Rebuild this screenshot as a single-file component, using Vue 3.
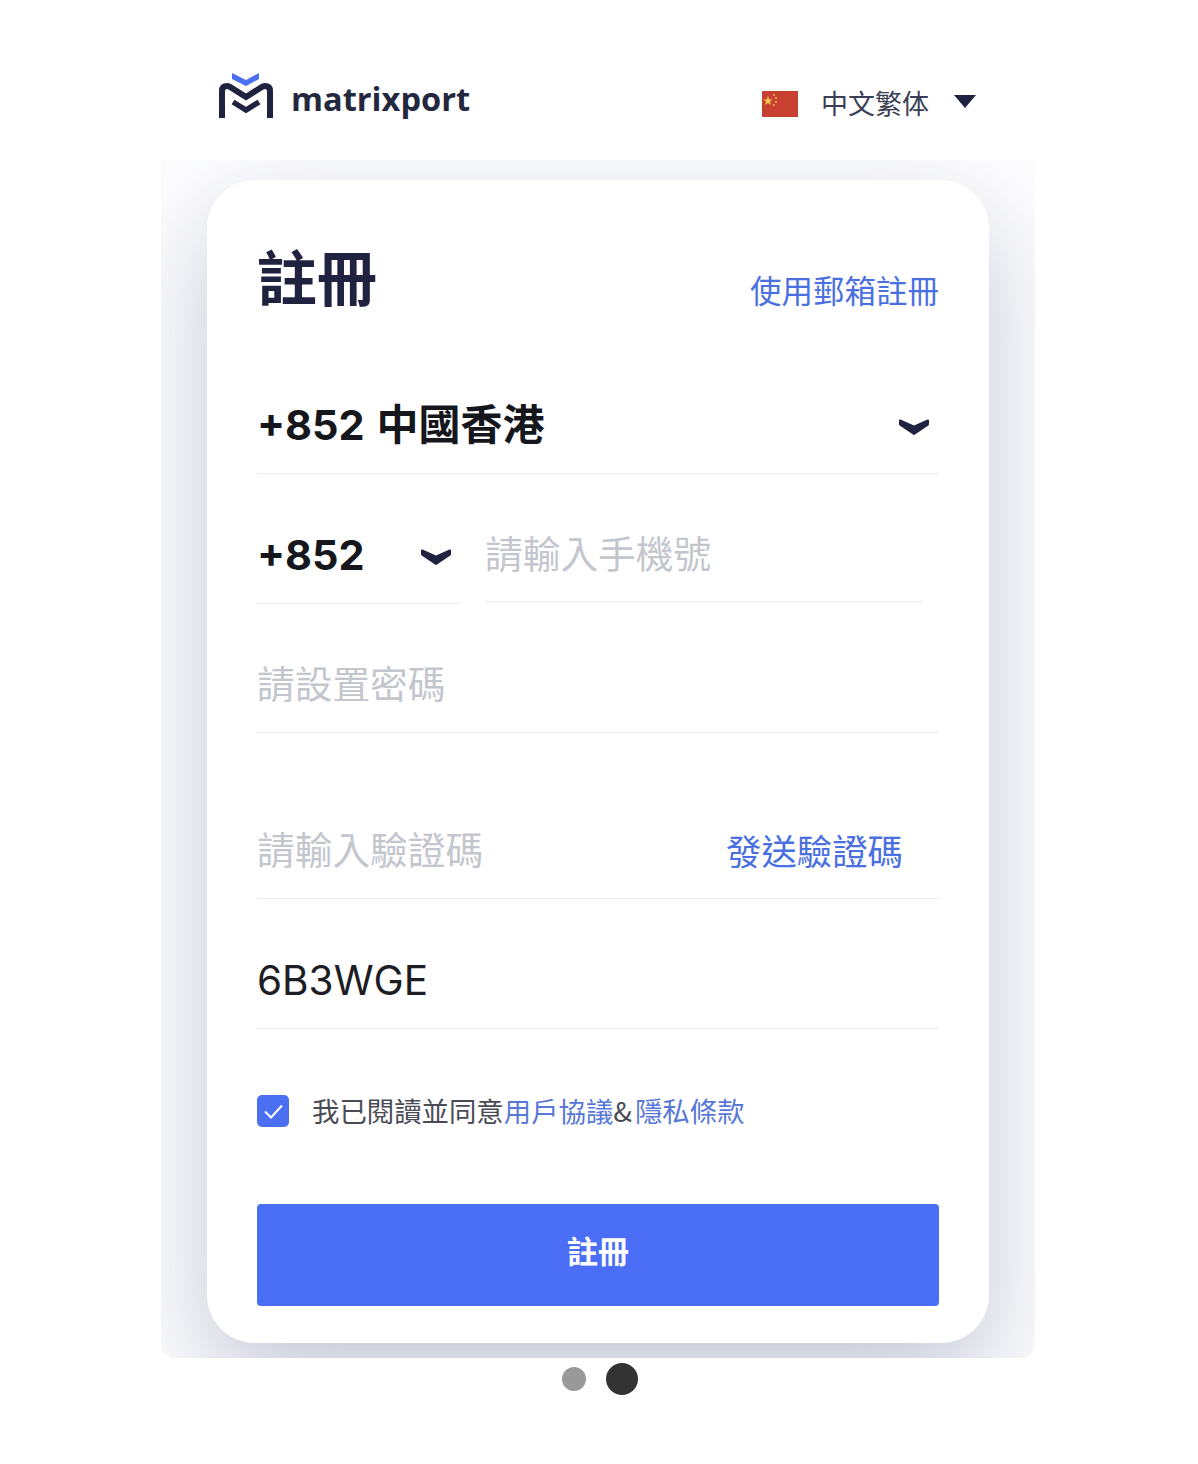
<script setup>
const cjk = '註冊'
</script>

<template>
  <div class="page">
    <header class="top">
      <div class="brand">
        <svg class="logo" viewBox="0 0 54 46" xmlns="http://www.w3.org/2000/svg">
          <path d="M13 0 L27 7 L40 0 V6 L27 13 L13 6 Z" fill="#4a6ff0" />
          <path d="M3 45 V18 Q3 13 8 13 Q10 13 12 14.5 L27 24 L42 14.5 Q44 13 46 13 Q51 13 51 18 V45" fill="none" stroke="#1f2340" stroke-width="6" />
          <path d="M14 29 L27 37 L40 29" fill="none" stroke="#1f2340" stroke-width="5.500" />
        </svg>
        <span class="brand-name">matrixport</span>
      </div>
      <div class="lang">
        <svg class="flag" viewBox="0 0 36 26" xmlns="http://www.w3.org/2000/svg">
          <rect width="36" height="26" fill="#c8402f" />
          <polygon points="6,5 7.2,8.4 10.8,8.4 7.9,10.6 9,14 6,12 3,14 4.1,10.6 1.2,8.4 4.8,8.4" fill="#f2c94c" />
          <circle cx="12" cy="4" r="0.9" fill="#f2c94c" />
          <circle cx="14" cy="7" r="0.9" fill="#f2c94c" />
          <circle cx="14" cy="11" r="0.9" fill="#f2c94c" />
          <circle cx="12" cy="14" r="0.9" fill="#f2c94c" />
        </svg>
        <span class="lang-name">中文繁体</span>
        <span class="caret"></span>
      </div>
    </header>

    <section class="panel">
      <div class="card">
        <div class="card-head">
          <h1 class="title">{{ cjk }}</h1>
          <a class="link-mail">使用郵箱註冊</a>
        </div>

        <div class="row row-region">
          <span class="value">+852 <span class="region">中國香港</span></span>
          <svg class="chev" viewBox="0 0 30 17" xmlns="http://www.w3.org/2000/svg">
            <path d="M1.5 0.5 L15 6.5 L28.500 0.5 Q30 0 30 1.500 V5 Q30 6 29 6.800 L16 15.600 Q15 16.200 14 15.600 L1 6.800 Q0 6 0 5 V1.500 Q0 0 1.500 0.5 Z" fill="#1f2340" />
          </svg>
        </div>

        <div class="phone">
          <div class="row code">
            <span class="value">+852</span>
            <svg class="chev" viewBox="0 0 30 17" xmlns="http://www.w3.org/2000/svg">
              <path d="M1.5 0.5 L15 6.5 L28.500 0.5 Q30 0 30 1.500 V5 Q30 6 29 6.800 L16 15.600 Q15 16.200 14 15.600 L1 6.800 Q0 6 0 5 V1.500 Q0 0 1.500 0.5 Z" fill="#1f2340" />
            </svg>
          </div>
          <div class="row number">
            <span class="hint">請輸入手機號</span>
          </div>
        </div>

        <div class="row row-pass">
          <span class="hint">請設置密碼</span>
        </div>

        <div class="row row-sms">
          <span class="hint">請輸入驗證碼</span>
          <a class="send">發送驗證碼</a>
        </div>

        <div class="row row-invite">
          <span class="invite">6B3WGE</span>
        </div>

        <div class="agree">
          <span class="check">
            <svg viewBox="0 0 32 32" xmlns="http://www.w3.org/2000/svg">
              <path d="M8 16.500 L14 22.500 L25 10.500" fill="none" stroke="#fff" stroke-width="2" />
            </svg>
          </span>
          <p class="agree-text">我已閱讀並同意<a>用戶協議</a><span class="amp">&amp;</span><a>隱私條款</a></p>
        </div>

        <button class="submit"><span>註冊</span></button>
      </div>
    </section>

    <div class="dots">
      <span class="dot"></span>
      <span class="dot active"></span>
    </div>
  </div>
</template>

<style>
html,
body {
  background: #fff;
}
</style>

<style scoped>
.page {
  width: 1198px;
  height: 1464px;
  overflow: hidden;
  font-family: "Noto Sans CJK TC", "Noto Sans", sans-serif;
  background: #fff;
}

.top {
  height: 160px;
  box-sizing: border-box;
  padding: 73px 222px 0 219px;
  display: flex;
  justify-content: space-between;
  align-items: flex-start;
}

.brand {
  display: flex;
  align-items: flex-start;
  gap: 18px;
}

.logo {
  width: 54px;
  height: 46px;
}

.brand-name {
  font-family: "Open Sans", sans-serif;
  font-size: 32.6px;
  font-weight: 700;
  color: #24283f;
  line-height: 46px;
  margin-top: 3px;
}

.lang {
  display: flex;
  align-items: center;
  margin-top: 10px;
}

.flag {
  width: 36px;
  height: 26px;
  margin-top: 2px;
}

.lang-name {
  font-size: 27px;
  line-height: 40px;
  color: #3a3f55;
  margin-left: 23px;
  margin-right: 25px;
}

.caret {
  width: 0;
  height: 0;
  border-left: 11px solid transparent;
  border-right: 11px solid transparent;
  border-top: 13px solid #1f2340;
  margin-top: -3px;
}

.panel {
  width: 874px;
  height: 1198px;
  margin-left: 161px;
  box-sizing: border-box;
  padding: 20px 46px 0;
  overflow: hidden;
  border-radius: 0 0 14px 14px;
  background: #fdfdfe;
}

.card {
  width: 782px;
  height: 1163px;
  box-sizing: border-box;
  padding: 0 50px;
  background: #fff;
  border-radius: 48px;
  box-shadow: 0 40px 100px rgba(70, 78, 125, 0.3);
}

.card-head {
  height: 198px;
  display: flex;
  justify-content: space-between;
  align-items: flex-start;
}

.title {
  margin: 51px 0 0;
  font-size: 60px;
  line-height: 88px;
  font-weight: 700;
  color: #1f2340;
}

.link-mail {
  margin-top: 86px;
  font-size: 31.5px;
  line-height: 46px;
  color: #4a6fe0;
}

.row {
  height: 96px;
  box-sizing: border-box;
  display: flex;
  align-items: center;
  justify-content: space-between;
  border-bottom: 1px solid #ececf0;
}

.row-region {
  padding-right: 10px;
}

.value {
  font-family: Inter, "Noto Sans CJK TC", sans-serif;
  font-size: 41.4px;
  font-weight: 700;
  color: #16171c;
  line-height: 60px;
  white-space: nowrap;
  margin-bottom: 2px;
}

.region {
  font-size: 42px;
  font-weight: 700;
  margin-left: 2px;
}

.chev {
  width: 30px;
  height: 17px;
  flex: none;
  margin-top: 4px;
}

.phone {
  display: flex;
  align-items: flex-start;
  margin-top: 34px;
}

.code {
  width: 204px;
  padding-right: 10px;
}

.number {
  width: 438px;
  height: 94px;
  margin-left: 24px;
}

.hint {
  font-size: 37.7px;
  color: #c3c6cd;
  line-height: 54px;
  white-space: nowrap;
  margin-bottom: 5px;
}

.row-pass {
  margin-top: 33px;
}

.row-sms {
  margin-top: 70px;
  padding-right: 36px;
}

.send {
  font-size: 35.4px;
  line-height: 50px;
  color: #4a6fe0;
  margin-bottom: 2px;
}

.row-invite {
  margin-top: 34px;
}

.invite {
  font-family: Inter, sans-serif;
  font-size: 40.5px;
  color: #1d1e24;
}

.agree {
  margin-top: 65px;
  height: 34px;
  display: flex;
  align-items: center;
}

.check {
  width: 32px;
  height: 32px;
  flex: none;
  background: #4a6ff0;
  border-radius: 5px;
}

.check svg {
  display: block;
  width: 32px;
  height: 32px;
}

.agree-text {
  margin: -2px 0 0 23px;
  font-size: 27.4px;
  line-height: 34px;
  color: #4a4c55;
  white-space: nowrap;
}

.amp {
  margin-right: 3px;
}

.agree-text a {
  color: #5878d8;
}

.submit {
  display: block;
  width: 682px;
  height: 102px;
  margin-top: 76px;
  padding: 0 0 11px;
  border: 0;
  border-radius: 4px;
  background: #4a6ef5;
  color: #fff;
  font-family: inherit;
  font-size: 31px;
  font-weight: 700;
}

.dots {
  display: flex;
  align-items: center;
  height: 32px;
  margin-top: 5px;
  padding-left: 562px;
  gap: 20px;
}

.dot {
  width: 24px;
  height: 24px;
  border-radius: 50%;
  background: #999;
}

.dot.active {
  width: 32px;
  height: 32px;
  background: #333;
}
</style>
